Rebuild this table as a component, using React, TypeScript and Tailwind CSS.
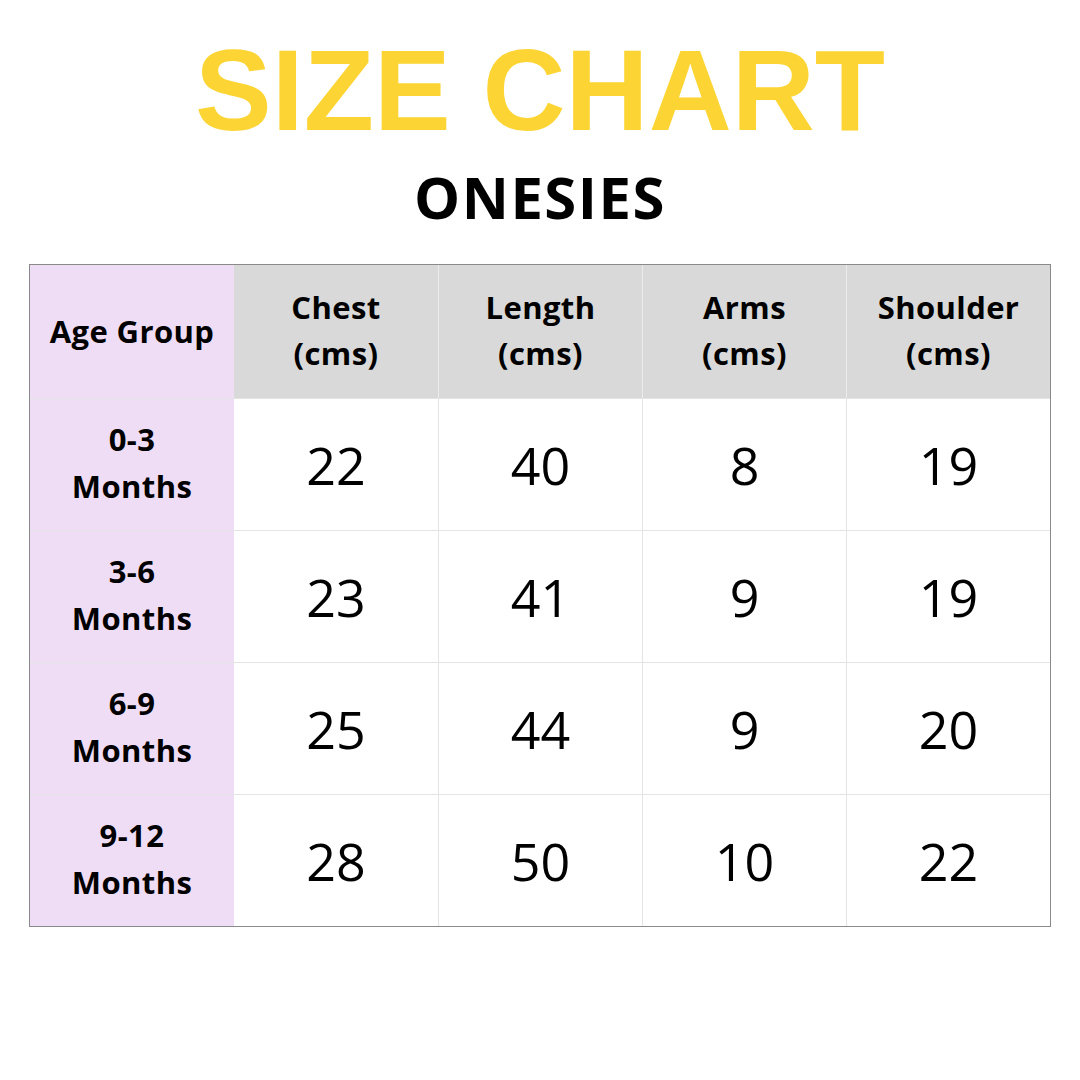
const headers = [
  ['Chest', '(cms)'],
  ['Length', '(cms)'],
  ['Arms', '(cms)'],
  ['Shoulder', '(cms)'],
];

const rows = [
  { age: '0-3', vals: ['22', '40', '8', '19'] },
  { age: '3-6', vals: ['23', '41', '9', '19'] },
  { age: '6-9', vals: ['25', '44', '9', '20'] },
  { age: '9-12', vals: ['28', '50', '10', '22'] },
];

export default function App() {
  return (
    <div className="flex h-[1080px] w-[1080px] flex-col items-center bg-white">
      <h1 className="mt-[26px] font-['Liberation_Sans',Arial,sans-serif] text-[115px] font-bold leading-[128px] text-[#fcd535]">
        SIZE CHART
      </h1>
      <h2 className="mt-[8px] font-['Open_Sans',sans-serif] text-[58px] font-bold leading-[70px] tracking-[1.5px] text-black">
        ONESIES
      </h2>
      <div className="mt-[32px] grid w-[1022px] grid-cols-5 border border-[#8a8a8a] font-['Open_Sans',sans-serif] text-black">
        <div className="flex h-[133px] items-center justify-center bg-[#efdcf5] text-[31px] font-bold tracking-[0.4px]">
          Age Group
        </div>
        {headers.map((h, i) => (
          <div
            key={h[0]}
            className={`flex h-[133px] flex-col items-center justify-center bg-[#d9d9d9] pb-[4px] text-[31px] font-bold leading-[46px] tracking-[0.4px] ${i > 0 ? 'border-l border-[#ececec]' : ''}`}
          >
            <span>{h[0]}</span>
            <span>{h[1]}</span>
          </div>
        ))}
        {rows.map((r) => (
          <>
            <div
              key={r.age}
              className="flex h-[132px] flex-col items-center justify-center border-t border-[#e4e4e4] bg-[#efdcf5] pb-[3px] text-[31px] font-bold leading-[47px] tracking-[0.4px]"
            >
              <span>{r.age}</span>
              <span>Months</span>
            </div>
            {r.vals.map((v, j) => (
              <div
                key={r.age + j}
                className={`flex h-[132px] items-center justify-center border-t border-[#e4e4e4] text-[52px] ${j > 0 ? 'border-l' : ''}`}
              >
                {v}
              </div>
            ))}
          </>
        ))}
      </div>
    </div>
  );
}
